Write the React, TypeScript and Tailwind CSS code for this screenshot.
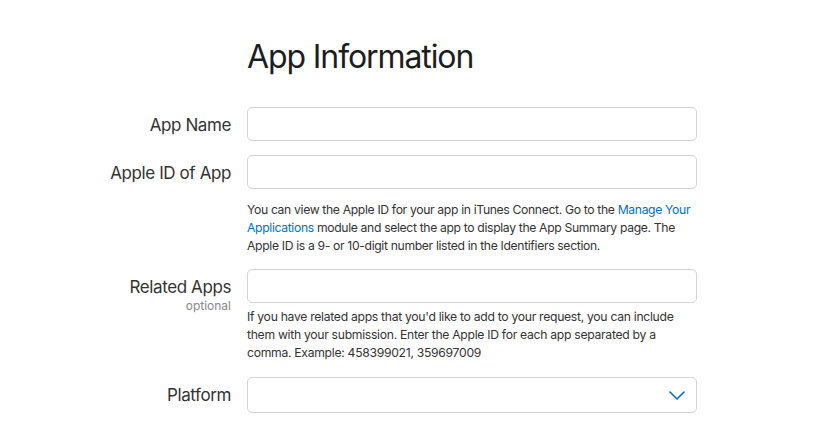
import React from "react";

function Field({ label, optional, children }: { label: string; optional?: boolean; children: React.ReactNode }) {
    return (
        <div className="grid grid-cols-[231px_450px] gap-x-4">
            <div className="flex flex-col items-end pt-[5px]">
                <span className="text-[17px] leading-[26px] tracking-[-0.4px] text-[#333]">{label}</span>
                {optional && <span className="text-[12px] leading-[14px] text-[#888] -mt-[1px]">optional</span>}
            </div>
            <div>{children}</div>
        </div>
    );
}

function Input() {
    return <div className="h-[34px] w-full rounded-[5px] border border-[#d2d2d7] bg-white" />;
}

export default function App() {
    return (
        <div className="min-h-[424px] w-[828px] bg-white font-['Inter',sans-serif] text-[#333] antialiased">
            <h1 className="pl-[247px] pt-[37px] text-[32px] leading-[40px] font-normal tracking-[-1.1px] text-[#1d1d1f]">
                App Information
            </h1>

            <div className="mt-[30px] flex flex-col">
                <Field label="App Name">
                    <Input />
                </Field>

                <div className="mt-[14px]">
                    <Field label="Apple ID of App">
                        <Input />
                        <p className="mt-[12px] whitespace-nowrap text-[12.2px] leading-[18px] tracking-[-0.35px] text-[#333]">
                            You can view the Apple ID for your app in iTunes Connect. Go to the{" "}
                            <a href="#" className="text-[#0070c9]">Manage Your</a>
                            <br />
                            <a href="#" className="text-[#0070c9]">Applications</a> module and select the app to display
                            the App Summary page. The
                            <br />
                            Apple ID is a 9- or 10-digit number listed in the Identifiers section.
                        </p>
                    </Field>
                </div>

                <div className="mt-[14px]">
                    <Field label="Related Apps" optional>
                        <Input />
                        <p className="mt-[5px] whitespace-nowrap text-[12.2px] leading-[18px] tracking-[-0.3px] text-[#333]">
                            If you have related apps that you'd like to add to your request, you can include
                            <br />
                            them with your submission. Enter the Apple ID for each app separated by a
                            <br />
                            comma. Example: 458399021, 359697009
                        </p>
                    </Field>
                </div>

                <div className="mt-[15px]">
                    <Field label="Platform">
                        <div className="flex h-[36px] w-full items-center justify-end rounded-[5px] border border-[#d2d2d7] bg-white pr-[11px]">
                            <svg width="16" height="9" viewBox="0 0 16 9" fill="none">
                                <path d="M1 1l7 7 7-7" stroke="#0070c9" strokeWidth="1.6" strokeLinecap="round" strokeLinejoin="round" />
                            </svg>
                        </div>
                    </Field>
                </div>
            </div>
        </div>
    );
}
